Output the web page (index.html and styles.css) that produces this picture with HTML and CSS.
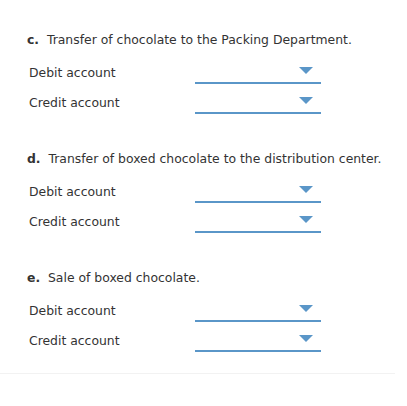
FILE: index.html
```html
<!DOCTYPE html>
<html>
<head>
<meta charset="utf-8">
<link rel="stylesheet" href="styles.css">
</head>
<body>
<div class="page">
  <div class="part">
    <div class="heading"><b>c.</b>&nbsp; Transfer of chocolate to the Packing Department.</div>
    <div class="row"><span class="label">Debit account</span><span class="select"><span class="arrow"></span></span></div>
    <div class="row"><span class="label">Credit account</span><span class="select"><span class="arrow"></span></span></div>
  </div>
  <div class="part">
    <div class="heading"><b>d.</b>&nbsp; Transfer of boxed chocolate to the distribution center.</div>
    <div class="row"><span class="label">Debit account</span><span class="select"><span class="arrow"></span></span></div>
    <div class="row"><span class="label">Credit account</span><span class="select"><span class="arrow"></span></span></div>
  </div>
  <div class="part part-last">
    <div class="heading"><b>e.</b>&nbsp; Sale of boxed chocolate.</div>
    <div class="row"><span class="label">Debit account</span><span class="select"><span class="arrow"></span></span></div>
    <div class="row"><span class="label">Credit account</span><span class="select"><span class="arrow"></span></span></div>
  </div>
  <div class="separator"></div>
</div>
</body>
</html>
```

FILE: styles.css
```css
html, body {
  margin: 0;
  padding: 0;
  background: #ffffff;
}
.page {
  font-family: "DejaVu Sans", Verdana, sans-serif;
  font-size: 12.4px;
  color: #333333;
  padding-top: 32px;
  width: 395px;
}
.part {
  padding-left: 27px;
  margin-bottom: 37px;
}
.part-last {
  margin-bottom: 21px;
}
.heading {
  line-height: 16px;
  height: 16px;
  margin-bottom: 6px;
  white-space: nowrap;
}
.heading b {
  font-weight: bold;
}
.row {
  display: flex;
  align-items: flex-end;
  height: 30px;
}
.label {
  width: 166px;
  padding-left: 2px;
  line-height: 16px;
  padding-bottom: 3px;
}
.select {
  display: flex;
  justify-content: flex-end;
  align-items: flex-start;
  width: 126px;
  height: 22px;
  border-bottom: 2px solid #5a96c8;
  box-sizing: content-box;
}
.arrow {
  width: 0;
  height: 0;
  margin-top: 7px;
  margin-right: 8px;
  border-left: 7px solid transparent;
  border-right: 7px solid transparent;
  border-top: 7px solid #5a96c8;
}
.separator {
  height: 1px;
  background: #f2f2f2;
  width: 395px;
}
```
